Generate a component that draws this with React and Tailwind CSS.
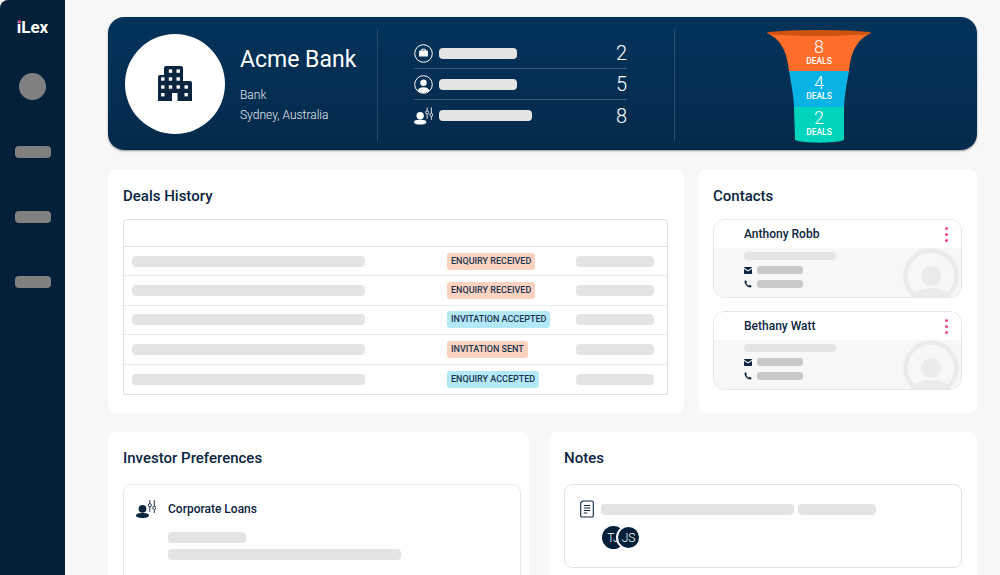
import React from 'react'

const Bar = ({ className }) => <div className={`rounded-[4px] bg-[#e4e4e4] ${className}`} />

const BuildingIcon = () => (
  <svg width="36" height="36" viewBox="0 0 36 36">
    <path fill="#0b2540" d="M1 35V11a2 2 0 0 1 2-2h4V2a2 2 0 0 1 2-2h15a2 2 0 0 1 2 2v13h7a2 2 0 0 1 2 2v18H20.500v-8H15v8z" />
    <g fill="#fff">
      <rect x="11.8" y="3.400" width="3.400" height="3.400" /><rect x="19.500" y="3.400" width="3.400" height="3.400" />
      <rect x="4.100" y="11.300" width="3.400" height="3.400" /><rect x="11.800" y="11.300" width="3.400" height="3.400" /><rect x="19.500" y="11.300" width="3.400" height="3.400" />
      <rect x="4.100" y="19.300" width="3.400" height="3.400" /><rect x="11.800" y="19.300" width="3.400" height="3.400" /><rect x="19.500" y="19.300" width="3.400" height="3.400" /><rect x="27.500" y="19.300" width="3.400" height="3.400" />
      <rect x="4.100" y="27" width="3.400" height="3.400" /><rect x="27.500" y="27" width="3.400" height="3.400" />
    </g>
  </svg>
)

const BriefcaseCircle = () => (
  <svg width="19" height="19" viewBox="0 0 19 19">
    <circle cx="9.5" cy="9.5" r="8.8" fill="none" stroke="#fff" strokeWidth="1" />
    <path fill="#fff" d="M7.300 6.500V5.600c0-.5.4-.8.8-.8h2.800c.4 0 .8.300.8.800v.9h1.300c.5 0 .9.400.9.900v4.300c0 .5-.4.900-.9.900H6c-.5 0-.9-.4-.9-.9V7.400c0-.5.4-.9.900-.9zm.9 0h2.600v-.8H8.200z" />
  </svg>
)

const UserCircle = () => (
  <svg width="19" height="19" viewBox="0 0 19 19">
    <circle cx="9.5" cy="9.5" r="8.8" fill="none" stroke="#fff" strokeWidth="1" />
    <circle cx="9.5" cy="7.8" r="3.2" fill="#fff" />
    <path fill="#fff" d="M3.500 15.600c.8-2.300 3.200-3.400 6-3.400s5.200 1.100 6 3.400a8.600 8.600 0 0 1-12 0z" />
  </svg>
)

const UserSliders = ({ color }) => (
  <svg width="20" height="18" viewBox="0 0 20 18" fill="none" stroke={color}>
    <circle cx="6.5" cy="8.8" r="3.9" fill={color} stroke="none" />
    <path fill={color} stroke="none" d="M0 15.500c0-1.800 2.800-2.500 6.500-2.500s6.500.7 6.500 2.500c0 1.600-2.800 2.500-6.500 2.500S0 17.100 0 15.500z" />
    <path strokeWidth="0.9" d="M13.800 0v3.500M13.800 7v5M18.300 0v6M18.300 9.500V13" />
    <circle cx="13.800" cy="5.200" r="1.600" strokeWidth="0.9" />
    <circle cx="18.300" cy="7.800" r="1.600" strokeWidth="0.9" />
  </svg>
)

const MailIcon = () => (
  <svg width="8" height="7" viewBox="0 0 8 7">
    <path fill="#0b2540" d="M0 .8C0 .4.300 0 .8 0h6.400c.5 0 .8.400.8.800L4 3.200zM0 2l4 2.400L8 2v4.200c0 .5-.3.800-.8.800H.8C.3 7 0 6.700 0 6.200z" />
  </svg>
)

const PhoneIcon = () => (
  <svg width="8" height="8" viewBox="0 0 8 8">
    <path fill="#0b2540" d="M1.900.2 3 1.900 2.200 2.900c.4 1.100 1.400 2.100 2.700 2.700l1-.8L7.600 6 6.800 7.500C3.500 7.700.4 4.400.5 1z" />
  </svg>
)

const DocIcon = () => (
  <svg width="14" height="18" viewBox="0 0 14 18" fill="none" stroke="#0b2540" strokeWidth="1.1">
    <path d="M2.500 1h9.500c.7 0 1.300.6 1.300 1.300v13.400c0 .7-.6 1.300-1.300 1.300H2c-.7 0-1.300-.6-1.300-1.300V2.800z" />
    <path d="M3.800 5.500h6.400M3.800 8h6.400M3.800 10.500h6.400M3.800 13h3.500" strokeWidth="1" />
  </svg>
)

const Funnel = () => (
  <svg width="106" height="114" viewBox="0 0 106 114" fontFamily="Roboto, sans-serif" textAnchor="middle" fill="#fff">
    <path fill="#ff6d2a" d="M1 3C14 9 21 20 23 41H83C85 20 92 9 105 3z" />
    <ellipse cx="53" cy="3" rx="52" ry="3" fill="#cf5210" />
    <path fill="#07b3e5" d="M23 41H83C81 53 78.500 64 78 77H28C27.500 64 25 53 23 41z" />
    <path fill="#00d4bc" d="M28 77H78V110C70 113.500 36 113.500 29 110z" />
    <text x="53" y="23" fontSize="18" fontWeight="300">8</text>
    <text x="53" y="34" fontSize="8.5" fontWeight="500">DEALS</text>
    <text x="53" y="59" fontSize="18" fontWeight="300">4</text>
    <text x="53" y="69" fontSize="8.5" fontWeight="500">DEALS</text>
    <text x="53" y="94" fontSize="18" fontWeight="300">2</text>
    <text x="53" y="105" fontSize="8.5" fontWeight="500">DEALS</text>
  </svg>
)

const AvatarMark = () => (
  <svg width="56" height="50" viewBox="0 0 56 50" className="absolute right-[2px] bottom-0">
    <circle cx="28" cy="28" r="25.5" fill="none" stroke="#ebebeb" strokeWidth="4.5" />
    <circle cx="28" cy="28" r="10" fill="#ebebeb" />
    <path fill="#ebebeb" d="M8 50c2-7 10-10 20-10s18 3 20 10z" />
  </svg>
)

const Card = ({ title, className, titleClass, children }) => (
  <section className={`rounded-lg bg-white pl-[15px] ${className}`}>
    <h2 className={`text-[15px] leading-5 font-medium text-[#0b2540] ${titleClass}`}>{title}</h2>
    {children}
  </section>
)

const statRows = [
  { icon: <BriefcaseCircle />, width: 'w-[78px]', value: 2 },
  { icon: <UserCircle />, width: 'w-[78px]', value: 5 },
  { icon: <UserSliders color="#fff" />, width: 'w-[93px]', value: 8 },
]

const deals = [
  { label: 'ENQUIRY RECEIVED', color: 'bg-[#fdd3c0]' },
  { label: 'ENQUIRY RECEIVED', color: 'bg-[#fdd3c0]' },
  { label: 'INVITATION ACCEPTED', color: 'bg-[#b2e8f8]' },
  { label: 'INVITATION SENT', color: 'bg-[#fdd3c0]' },
  { label: 'ENQUIRY ACCEPTED', color: 'bg-[#b2e8f8]' },
]

const contacts = ['Anthony Robb', 'Bethany Watt']

export default function App() {
  return (
    <div className="flex h-[575px] w-[1000px] overflow-hidden bg-[#f7f7f7] font-['Roboto',sans-serif]">
      <aside className="flex w-[65px] shrink-0 flex-col items-center rounded-tl-lg bg-[#03203a] pt-[17px]">
        <div className="relative text-[17px] leading-5 font-bold text-white">
          iLex
          <span className="absolute top-[3px] left-[1px] h-[3px] w-[3px] rounded-full bg-[#ef3d7b]" />
        </div>
        <div className="mt-[36px] h-[27px] w-[27px] rounded-full bg-[#808080]" />
        <div className="mt-[46px] h-3 w-9 rounded bg-[#808080]" />
        <div className="mt-[53px] h-3 w-9 rounded bg-[#808080]" />
        <div className="mt-[53px] h-3 w-9 rounded bg-[#808080]" />
      </aside>

      <main className="flex min-w-0 flex-1 flex-col gap-[19px] pt-[17px] pr-[23px] pl-[43px]">
        <header className="flex h-[133px] shrink-0 items-center rounded-2xl bg-gradient-to-b from-[#03335a] to-[#032a4c] pl-[17px] shadow-[0_1px_2px_rgba(0,0,0,0.4)]">
          <div className="flex h-[100px] w-[100px] items-center justify-center rounded-full bg-white">
            <BuildingIcon />
          </div>
          <div className="ml-[15px] w-[137px] text-white">
            <div className="pt-px text-[23px] leading-8 whitespace-nowrap">Acme Bank</div>
            <div className="mt-[9px] text-xs leading-5 font-light text-[#e6ebf0]">Bank</div>
            <div className="text-xs leading-5 font-light text-[#e6ebf0]">Sydney, Australia</div>
          </div>
          <div className="mt-[3px] h-[112px] w-px bg-[#2a4b6b]" />
          <div className="mt-[2px] ml-9 w-[213px]">
            {statRows.map((row, i) => (
              <div key={row.value} className={`flex h-[31px] items-center gap-[6px] ${i < 2 ? 'border-b border-[#3a5875]' : ''}`}>
                <span className="flex w-[19px] justify-center">{row.icon}</span>
                <div className={`h-[11px] rounded bg-[#e4e4e4] ${row.width}`} />
                <span className="ml-auto text-xl font-light text-white">{row.value}</span>
              </div>
            ))}
          </div>
          <div className="mt-[3px] ml-[47px] h-[112px] w-px bg-[#2a4b6b]" />
          <div className="ml-[91px] pt-[6px]">
            <Funnel />
          </div>
        </header>

        <div className="flex h-[244px] shrink-0 gap-[14px]">
          <Card title="Deals History" titleClass="mb-[13px]" className="flex-1 pt-[17px] pr-[16px]">
            <div className="overflow-hidden rounded-t border border-[#dfdfdf]">
              <div className="h-[27px] border-b border-[#dfdfdf]" />
              {deals.map((deal, i) => (
                <div key={i} className={`flex h-[29.4px] items-center ${i < 4 ? 'border-b border-[#ececec]' : ''}`}>
                  <Bar className="ml-2 h-[11px] w-[233px]" />
                  <div className="ml-[82px] flex w-[116px] shrink-0 items-center">
                    <span className={`rounded-[3px] px-1 text-[9px] leading-[17px] font-medium whitespace-nowrap text-[#1b3450] ${deal.color}`}>{deal.label}</span>
                  </div>
                  <Bar className="ml-[13px] h-[11px] w-[78px]" />
                </div>
              ))}
            </div>
          </Card>

          <Card title="Contacts" titleClass="mb-[13px]" className="w-[279px] pt-[17px] pr-[15px]">
            <div className="flex flex-col gap-[13px]">
              {contacts.map((name) => (
                <div key={name} className="relative h-[79px] overflow-hidden rounded-xl border border-[#e6e6e6]">
                  <div className="flex h-[28px] items-center justify-between bg-white pr-[13px] pl-[30px]">
                    <span className="text-xs font-medium text-[#0b2540]">{name}</span>
                    <span className="flex flex-col gap-[3px]">
                      <i className="h-[3px] w-[3px] rounded-full bg-[#ef4a7c]" />
                      <i className="h-[3px] w-[3px] rounded-full bg-[#ef4a7c]" />
                      <i className="h-[3px] w-[3px] rounded-full bg-[#ef4a7c]" />
                    </span>
                  </div>
                  <div className="relative h-[50px] bg-[#f7f7f7] pt-[4px] pl-[30px]">
                    <AvatarMark />
                    <Bar className="relative h-2 w-[92px]" />
                    <div className="relative mt-[6px] flex items-center gap-[5px]">
                      <MailIcon />
                      <div className="h-2 w-[46px] rounded-[3px] bg-[#c9c9c9]" />
                    </div>
                    <div className="relative mt-[6px] flex items-center gap-[5px]">
                      <PhoneIcon />
                      <div className="h-2 w-[46px] rounded-[3px] bg-[#c9c9c9]" />
                    </div>
                  </div>
                </div>
              ))}
            </div>
          </Card>
        </div>

        <div className="flex flex-1 gap-5">
          <Card title="Investor Preferences" titleClass="mb-[16px]" className="w-[421px] pt-[16px] pr-2">
            <div className="h-[120px] rounded-lg border border-[#e8e8e8] pt-[15px] pl-3">
              <div className="flex items-center gap-3">
                <UserSliders color="#0b2540" />
                <span className="text-xs font-medium text-[#0b2540]">Corporate Loans</span>
              </div>
              <Bar className="mt-[14px] ml-8 h-[11px] w-[78px]" />
              <Bar className="mt-[6px] ml-8 h-[11px] w-[233px]" />
            </div>
          </Card>

          <Card title="Notes" titleClass="mb-[16px]" className="flex-1 pt-[16px] pr-[15px]">
            <div className="h-[84px] rounded-lg border border-[#e2e2e2] pt-[15px] pl-[15px]">
              <div className="flex items-center gap-[7px]">
                <DocIcon />
                <Bar className="h-[11px] w-[193px]" />
                <Bar className="-ml-[3px] h-[11px] w-[78px]" />
              </div>
              <div className="mt-2 ml-[22px] flex">
                <span className="flex h-[23px] w-[23px] items-center justify-center rounded-full bg-[#03203a] text-xs font-light text-white">TJ</span>
                <span className="-ml-[9px] flex h-[25px] w-[25px] -translate-y-px items-center justify-center rounded-full border-2 border-white bg-[#03203a] text-xs font-light text-white">JS</span>
              </div>
            </div>
          </Card>
        </div>
      </main>
    </div>
  )
}
